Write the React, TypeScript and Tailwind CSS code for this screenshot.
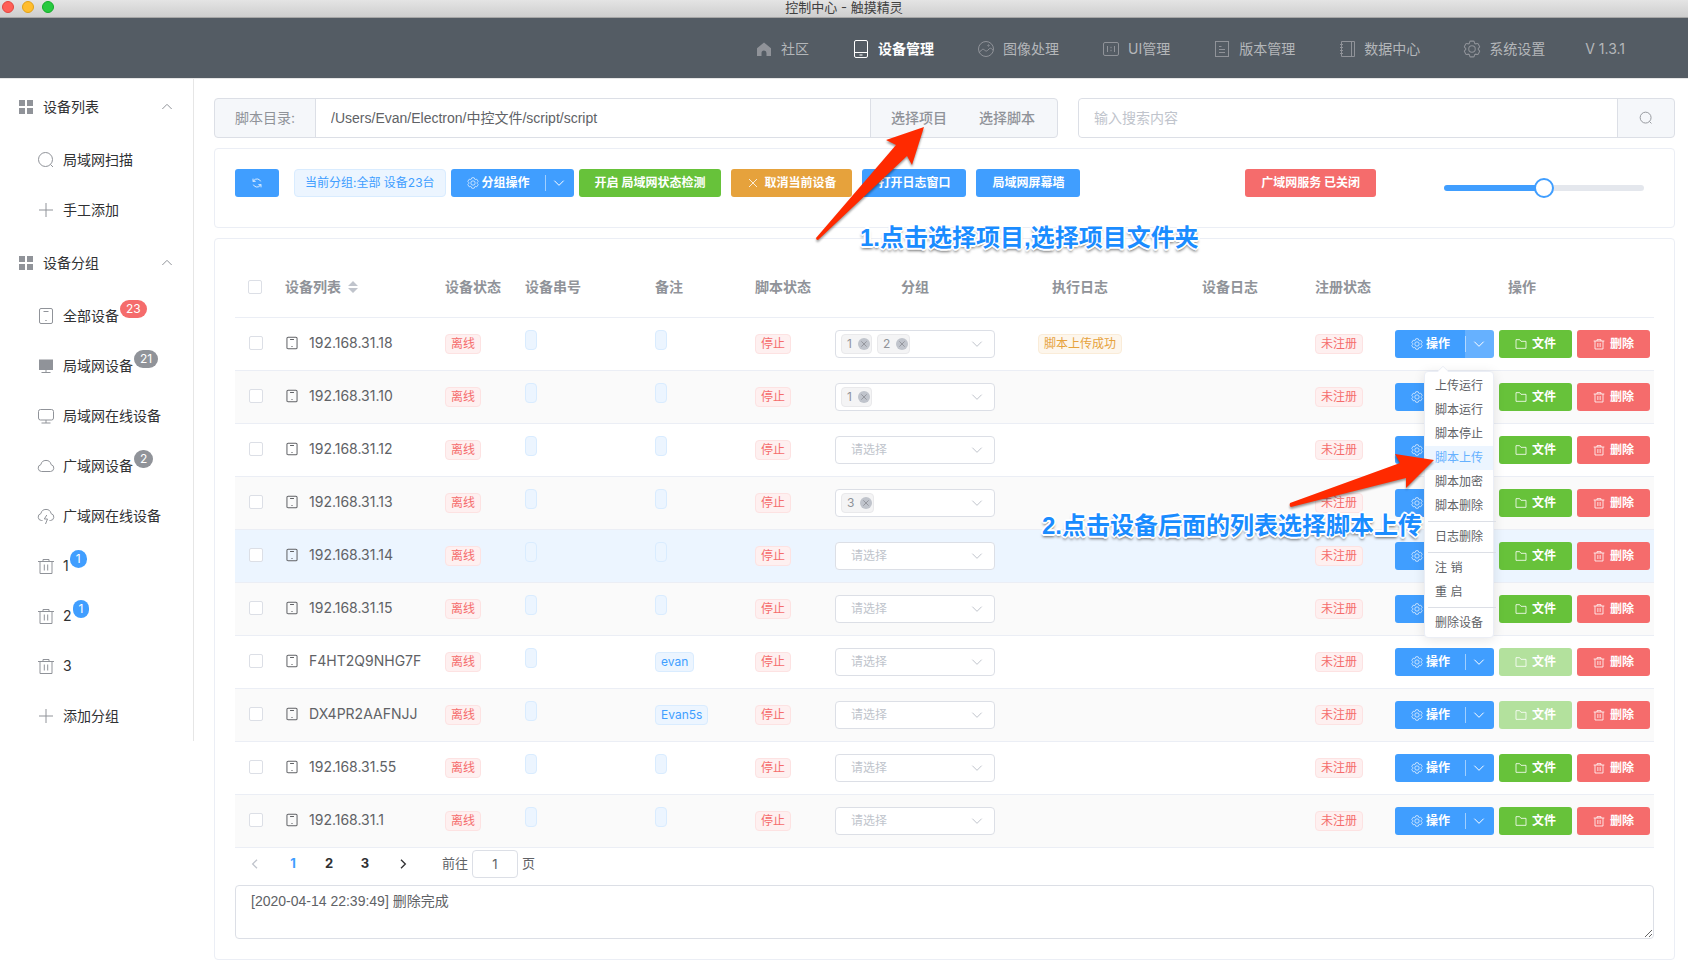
import { useState } from 'react';
import type { ReactNode } from 'react';

// ─── Icons ────────────────────────────────────────────────────────────────────
const gear =
  'M600.704 64a32 32 0 0 1 30.464 22.208l35.2 109.376c14.784 7.232 28.928 15.36 42.432 24.512l112.384-24.192a32 32 0 0 1 34.432 15.36L944.32 364.8a32 32 0 0 1-4.032 37.504l-77.12 85.12a357.12 357.12 0 0 1 0 49.024l77.12 85.248a32 32 0 0 1 4.032 37.504l-88.704 153.6a32 32 0 0 1-34.432 15.296L708.8 803.904c-13.44 9.088-27.648 17.28-42.368 24.512l-35.264 109.376A32 32 0 0 1 600.704 960H423.296a32 32 0 0 1-30.464-22.208L357.696 828.48a351.616 351.616 0 0 1-42.56-24.64l-112.32 24.256a32 32 0 0 1-34.432-15.36L79.68 659.2a32 32 0 0 1 4.032-37.504l77.12-85.248a357.12 357.12 0 0 1 0-48.896l-77.12-85.248A32 32 0 0 1 79.68 364.8l88.704-153.6a32 32 0 0 1 34.432-15.296l112.32 24.256c13.568-9.152 27.776-17.408 42.56-24.64l35.2-109.312A32 32 0 0 1 423.232 64z';

const icons = {
  home: (
    <path
      d="M9 2.5 16 8.2V16h-4.5v-3a2.5 2.5 0 0 0-5 0v3H2V8.200z"
      fill="currentColor"
      stroke="none"
    />
  ),
  phone: (
    <>
      <rect x="2.500" y=".5" width="13" height="17" rx="1.500" />
      <path d="M2.500 12.500h13M7.500 15h3" />
    </>
  ),
  picture: (
    <>
      <circle cx="9" cy="9" r="7.500" />
      <circle cx="11.500" cy="5.500" r=".7" />
      <path d="m2.200 12.500 2.300-2.500c1-1 2-1 3 0s2 1.500 3 .5l1.500-1.500c1-1 2-1 2.800 0l1.200 1.200" />
    </>
  ),
  scale: (
    <>
      <rect x="1.500" y="2.500" width="15" height="13" rx="1.500" />
      <path d="M5.500 6v6M12.500 6v6M9 6.800v1.400M9 9.800v1.400" />
    </>
  ),
  tickets: (
    <>
      <rect x="2.500" y="1.500" width="13" height="15" />
      <path d="M6 6.500h2.500M6 9.500h6M6 12.500h6" />
    </>
  ),
  notebook: (
    <>
      <path d="M3.500 1.500h13v15h-13zM13.500 1.500v15" />
      <path d="M2 4.500h3M2 7.500h3M2 10.500h3M2 13.500h3" />
    </>
  ),
  setting: (
    <g transform="scale(.017578)" strokeWidth="58">
      <path d={gear} />
      <circle cx="512" cy="512" r="185" />
    </g>
  ),
  grid: (
    <path
      d="M2 2h6v6H2zM10 2h6v6h-6zM2 10h6v6H2zM10 10h6v6h-6z"
      fill="currentColor"
      stroke="none"
    />
  ),
  search: (
    <>
      <circle cx="8.500" cy="8.500" r="7" />
      <path d="m13.500 13.500 2.500 2.500" />
    </>
  ),
  plus: <path d="M2 9h14M9 2v14" />,
  mobile: (
    <>
      <rect x="2.500" y="1.500" width="13" height="15" rx="1.500" />
      <path d="M6.500 4.500h5M8.300 13.500h1.400" />
    </>
  ),
  platform: (
    <>
      <path d="M2 2.500h14V13H2z" fill="currentColor" stroke="none" />
      <path d="M9 13v2M4.500 15.500h9" />
    </>
  ),
  monitor: (
    <>
      <rect x="1.500" y="2.500" width="15" height="10.500" rx="2" />
      <path d="M9 13v3M4.500 16h9" />
    </>
  ),
  cloud: (
    <path d="M4.500 14.500a3.500 3.500 0 0 1-.6-6.900 5.200 5.200 0 0 1 10.200 0 3.500 3.500 0 0 1-.6 6.900z" />
  ),
  lightning: (
    <>
      <path d="M5.500 13.500h-1a3.500 3.500 0 0 1-.6-6.900 5.200 5.200 0 0 1 10.200 0 3.500 3.500 0 0 1-.6 6.900h-1" />
      <path d="M9.800 8 7.300 12h3.200l-2 5" />
    </>
  ),
  trash: (
    <path d="M1 4.500h16M6 4.500v-2h6v2M3 4.500v12h12v-12M7.300 7.500v6M10.700 7.500v6" />
  ),
  refresh: (
    <>
      <path d="M3.500 11.500A6 6 0 0 0 13.500 13l1.500-1.500M14.500 6.500A6 6 0 0 0 4.500 5L3 6.500" />
      <path d="M3 2.500v4h4M15 15.500v-4h-4" />
    </>
  ),
  folder: <path d="M1.500 2.500h5.500l2 2.500h7.500v10.500h-15z" />,
  close: <path d="m3 3 12 12M15 3 3 15" />,
  down: <path d="m2 5.500 7 7 7-7" />,
  up: <path d="m2 12 7-7 7 7" />,
  left: <path d="M12 2.500 5.500 9l6.500 6.500" />,
  right: <path d="M6 2.500 12.500 9 6 15.500" />,
};

type IconName = keyof typeof icons;

function Icon({ name, className = 'size-[18px] stroke-1' }: { name: IconName; className?: string }) {
  return (
    <svg
      viewBox="0 0 18 18"
      fill="none"
      stroke="currentColor"
      aria-hidden="true"
      className={`inline-block shrink-0 ${className}`}
    >
      {icons[name]}
    </svg>
  );
}

// ─── Data ─────────────────────────────────────────────────────────────────────
const navItems: { label: string; icon: IconName; active?: boolean }[] = [
  { label: '社区', icon: 'home' },
  { label: '设备管理', icon: 'phone', active: true },
  { label: '图像处理', icon: 'picture' },
  { label: 'UI管理', icon: 'scale' },
  { label: '版本管理', icon: 'tickets' },
  { label: '数据中心', icon: 'notebook' },
  { label: '系统设置', icon: 'setting' },
];

type SideItem = { label: string; icon: IconName; badge?: number; tone?: 'red' | 'gray' | 'blue' };

const sideGroups: { title: string; items: SideItem[] }[] = [
  {
    title: '设备列表',
    items: [
      { label: '局域网扫描', icon: 'search' },
      { label: '手工添加', icon: 'plus' },
    ],
  },
  {
    title: '设备分组',
    items: [
      { label: '全部设备', icon: 'mobile', badge: 23, tone: 'red' },
      { label: '局域网设备', icon: 'platform', badge: 21, tone: 'gray' },
      { label: '局域网在线设备', icon: 'monitor' },
      { label: '广域网设备', icon: 'cloud', badge: 2, tone: 'gray' },
      { label: '广域网在线设备', icon: 'lightning' },
      { label: '1', icon: 'trash', badge: 1, tone: 'blue' },
      { label: '2', icon: 'trash', badge: 1, tone: 'blue' },
      { label: '3', icon: 'trash' },
      { label: '添加分组', icon: 'plus' },
    ],
  },
];

type Device = {
  name: string;
  remark?: string;
  groups?: string[];
  log?: string;
  current?: boolean;
  menuOpen?: boolean;
  fileDisabled?: boolean;
};

const devices: Device[] = [
  { name: '192.168.31.18', groups: ['1', '2'], log: '脚本上传成功', menuOpen: true },
  { name: '192.168.31.10', groups: ['1'] },
  { name: '192.168.31.12' },
  { name: '192.168.31.13', groups: ['3'] },
  { name: '192.168.31.14', current: true },
  { name: '192.168.31.15' },
  { name: 'F4HT2Q9NHG7F', remark: 'evan', fileDisabled: true },
  { name: 'DX4PR2AAFNJJ', remark: 'Evan5s', fileDisabled: true },
  { name: '192.168.31.55' },
  { name: '192.168.31.1' },
];

const menuSections = [
  ['上传运行', '脚本运行', '脚本停止', '脚本上传', '脚本加密', '脚本删除'],
  ['日志删除'],
  ['注 销', '重 启'],
  ['删除设备'],
];

const badgeTones = {
  red: 'bg-[#f56c6c]',
  gray: 'bg-[#909399]',
  blue: 'bg-[#409eff]',
};

const tagTones = {
  blue: 'border-[#d9ecff] bg-[#ecf5ff] text-[#409eff]',
  red: 'border-[#fde2e2] bg-[#fef0f0] text-[#f56c6c]',
  orange: 'border-[#faecd8] bg-[#fdf6ec] text-[#e6a23c]',
};

const buttonTones = {
  blue: 'bg-[#409eff]',
  green: 'bg-[#67c23a]',
  orange: 'bg-[#e6a23c]',
  red: 'bg-[#f56c6c]',
};

// ─── Small parts ──────────────────────────────────────────────────────────────
function Tag({ tone, children }: { tone: keyof typeof tagTones; children?: ReactNode }) {
  return (
    <span className={`inline-block h-5 rounded border px-[5px] text-xs leading-[18px] ${tagTones[tone]}`}>
      {children}
    </span>
  );
}

function Button({
  tone,
  icon,
  disabled,
  children,
}: {
  tone: keyof typeof buttonTones;
  icon?: IconName;
  disabled?: boolean;
  children: ReactNode;
}) {
  return (
    <button
      type="button"
      disabled={disabled}
      className={`flex h-7 items-center gap-[5px] rounded-[3px] px-4 text-xs font-bold text-white disabled:bg-[#b3e19d] ${buttonTones[tone]}`}
    >
      {icon && <Icon name={icon} className="size-3 stroke-[1.200]" />}
      {children}
    </button>
  );
}

function SplitButton({ label, open }: { label: string; open?: boolean }) {
  return (
    <div className="flex h-7 text-xs font-bold text-white">
      <button
        type="button"
        className="flex items-center gap-[3px] rounded-l-[3px] bg-[#409eff] pl-4 pr-[15px]"
      >
        <Icon name="setting" className="size-3" />
        {label}
      </button>
      <button
        type="button"
        aria-label="更多"
        aria-expanded={!!open}
        className={`flex w-[29px] items-center rounded-r-[3px] ${open ? 'bg-[#66b1ff]' : 'bg-[#409eff]'}`}
      >
        <span className="h-4 w-px bg-white/50" />
        <Icon name="down" className="ml-[7px] size-3 stroke-[1.500]" />
      </button>
    </div>
  );
}

function ActionMenu() {
  return (
    <div className="absolute left-[29px] top-[41px] z-10 rounded border border-[#ebeef5] bg-white py-[2px] text-xs text-[#606266] shadow-[0_2px_12px_rgba(0,0,0,0.1)]">
      <span className="absolute -top-[5px] left-[14px] size-2 rotate-45 rounded-tl-[2px] border-l border-t border-[#ebeef5] bg-white" />
      {menuSections.map((section, i) => (
        <div
          key={section[0]}
          className={i > 0 ? 'relative pt-[7px] before:absolute before:-right-[3px] before:left-[3px] before:top-[3px] before:h-px before:bg-[#dcdfe6]' : 'relative'}
        >
          {section.map((item) => (
            <button
              key={item}
              type="button"
              className={`block h-6 w-full whitespace-nowrap px-[10px] text-left leading-6 ${
                item === '脚本上传' ? 'bg-[#ecf5ff] text-[#66b1ff]' : ''
              }`}
            >
              {item}
            </button>
          ))}
        </div>
      ))}
    </div>
  );
}

function GroupSelect({ device }: { device: Device }) {
  const groups = device.groups ?? [];
  return (
    <div className="flex h-7 w-[160px] items-center gap-[5px] rounded border border-[#dcdfe6] bg-white pl-[5px] pr-[11px]">
      {groups.map((g) => (
        <span
          key={g}
          className="flex h-5 items-center gap-[6px] rounded border border-[#e9e9eb] bg-[#f4f4f5] pl-[5px] pr-px text-xs text-[#909399]"
        >
          {g}
          <button
            type="button"
            aria-label={`移除分组${g}`}
            className="flex size-3 items-center justify-center rounded-full bg-[#c0c4cc]"
          >
            <Icon name="close" className="size-2 stroke-2" />
          </button>
        </span>
      ))}
      <select
        aria-label={`${device.name} 分组`}
        defaultValue=""
        className={`h-full min-w-0 flex-1 appearance-none bg-transparent text-xs text-[#c0c4cc] outline-none ${
          groups.length ? '' : 'pl-[10px]'
        }`}
      >
        <option value="">{groups.length ? '' : '请选择'}</option>
        <option>1</option>
        <option>2</option>
        <option>3</option>
      </select>
      <Icon name="down" className="size-3 stroke-[1.500] text-[#c0c4cc]" />
    </div>
  );
}

const checkboxClass =
  'block size-[14px] mx-auto appearance-none rounded-[2px] border border-[#dcdfe6] bg-white';

// ─── Page parts ───────────────────────────────────────────────────────────────
function TitleBar() {
  return (
    <div className="relative flex h-[18px] justify-center border-b border-[#a6a6a6] bg-linear-to-b from-[#e4e4e4] to-[#cecece]">
      <div className="absolute left-[2px] top-px flex gap-2">
        <span className="size-3 rounded-full border border-[#e2463f] bg-[#ff5f57]" />
        <span className="size-3 rounded-full border border-[#e1a116] bg-[#ffbd2e]" />
        <span className="size-3 rounded-full border border-[#12ac28] bg-[#28c940]" />
      </div>
      <h1 className="text-[13px] leading-[15px] text-[#404040]">控制中心 - 触摸精灵</h1>
    </div>
  );
}

function Header() {
  return (
    <header className="flex h-[60px] justify-end bg-[#545c64] pr-[43px] pt-[2px]">
      <nav className="flex text-sm">
        {navItems.map((item) => (
          <a
            key={item.label}
            href="#"
            className={`flex items-center px-5 ${item.active ? 'font-bold text-white' : 'text-[#b4b7ba]'}`}
          >
            <span className={`mr-[5px] flex w-6 justify-center ${item.active ? '' : 'text-[#909399]'}`}>
              <Icon name={item.icon} />
            </span>
            {item.label}
          </a>
        ))}
        <span className="flex items-center px-5 text-[#b4b7ba]">V 1.3.1</span>
      </nav>
    </header>
  );
}

function Sidebar() {
  return (
    <aside className="w-[194px] shrink-0 self-start border-r border-[#e6e6e6] text-sm text-[#303133]">
      {sideGroups.map((group) => (
        <section key={group.title}>
          <button type="button" className="flex h-14 w-full items-center pl-[14px] pr-5">
            <span className="mr-[5px] flex w-6 justify-center text-[#909399]">
              <Icon name="grid" />
            </span>
            {group.title}
            <Icon name="up" className="ml-auto size-3 stroke-[1.500] text-[#909399]" />
          </button>
          <ul>
            {group.items.map((item) => (
              <li key={item.label}>
                <a href="#" className="flex h-[50px] items-center pl-[34px]">
                  <span className="mr-[5px] flex w-6 justify-center text-[#909399]">
                    <Icon name={item.icon} />
                  </span>
                  {item.label}
                  {item.badge && item.tone && (
                    <span
                      className={`ml-px mt-[9px] h-[18px] self-start rounded-full px-[6px] text-xs leading-[18px] text-white ${badgeTones[item.tone]}`}
                    >
                      {item.badge}
                    </span>
                  )}
                </a>
              </li>
            ))}
          </ul>
        </section>
      ))}
    </aside>
  );
}

function PathBar() {
  return (
    <div className="grid grid-cols-24 gap-5 text-sm text-[#909399]">
      <div className="col-span-14 flex h-10 rounded border border-[#dcdfe6] bg-[#f5f7fa]">
        <label htmlFor="script-dir" className="flex shrink-0 items-center px-5">
          脚本目录:
        </label>
        <input
          id="script-dir"
          defaultValue="/Users/Evan/Electron/中控文件/script/script"
          className='min-w-0 flex-1 border-x border-[#dcdfe6] bg-white px-[15px] font-["Liberation_Sans","Noto_Sans_CJK_SC",sans-serif] text-[#606266] outline-none'
        />
        <button type="button" className="shrink-0 pl-5 pr-4 font-medium">
          选择项目
        </button>
        <button type="button" className="shrink-0 pl-4 pr-[22px] font-medium">
          选择脚本
        </button>
      </div>
      <div className="col-span-10 flex h-10 rounded border border-[#dcdfe6] bg-[#f5f7fa]">
        <input
          aria-label="搜索"
          placeholder="输入搜索内容"
          className="min-w-0 flex-1 rounded-l border-r border-[#dcdfe6] bg-white px-[15px] outline-none placeholder:text-[#c0c4cc]"
        />
        <button type="button" aria-label="搜索" className="flex w-14 items-center justify-center">
          <Icon name="search" className="size-[14px] stroke-[1.200]" />
        </button>
      </div>
    </div>
  );
}

function Toolbar() {
  const [scale, setScale] = useState(50);
  return (
    <div className="mt-[10px] flex h-20 items-start rounded border border-[#ebeef5] p-5">
      <button
        type="button"
        aria-label="刷新"
        className="flex h-7 w-11 items-center justify-center rounded-[3px] bg-[#409eff] text-white"
      >
        <Icon name="refresh" className="size-3 stroke-[1.200]" />
      </button>
      <span className="ml-[15px] mr-[5px] h-7 rounded border border-[#d9ecff] bg-[#ecf5ff] px-[10px] text-xs leading-[26px] text-[#409eff]">
        当前分组:全部 设备23台
      </span>
      <SplitButton label="分组操作" />
      <div className="ml-[5px] flex gap-[10px]">
        <Button tone="green">开启 局域网状态检测</Button>
        <Button tone="orange" icon="close">取消当前设备</Button>
        <Button tone="blue">打开日志窗口</Button>
        <Button tone="blue">局域网屏幕墙</Button>
      </div>
      <div className="ml-auto mr-[10px] flex gap-[68px]">
        <Button tone="red">广域网服务 已关闭</Button>
        <input
          type="range"
          aria-label="缩放"
          value={scale}
          onChange={(e) => setScale(Number(e.target.value))}
          className="mt-4 h-[6px] w-[200px] appearance-none rounded-[3px] [&::-webkit-slider-thumb]:size-5 [&::-webkit-slider-thumb]:appearance-none [&::-webkit-slider-thumb]:rounded-full [&::-webkit-slider-thumb]:border-2 [&::-webkit-slider-thumb]:border-[#409eff] [&::-webkit-slider-thumb]:bg-white"
          style={{ background: `linear-gradient(to right, #409eff ${scale}%, #e4e7ed ${scale}%)` }}
        />
      </div>
    </div>
  );
}

function DeviceRow({ device, striped }: { device: Device; striped: boolean }) {
  const bg = device.current ? 'bg-[#ecf5ff]' : striped ? 'bg-[#fafafa]' : '';
  const cell = 'px-[10px] pb-[2px]';
  return (
    <tr className={`h-[53px] border-b border-[#ebeef5] ${bg}`}>
      <td className="pb-[2px] pl-[2px]">
        <input type="checkbox" aria-label={device.name} className={checkboxClass} />
      </td>
      <td className={cell}>
        <div className="flex items-center gap-[10px]">
          <Icon name="mobile" className="size-[14px] stroke-[1.300]" />
          {device.name}
        </div>
      </td>
      <td className={cell}><Tag tone="red">离线</Tag></td>
      <td className={cell}><Tag tone="blue" /></td>
      <td className={cell}><Tag tone="blue">{device.remark}</Tag></td>
      <td className={cell}><Tag tone="red">停止</Tag></td>
      <td className="px-[10px]"><GroupSelect device={device} /></td>
      <td className={`text-center ${cell}`}>{device.log && <Tag tone="orange">{device.log}</Tag>}</td>
      <td />
      <td className={cell}><Tag tone="red">未注册</Tag></td>
      <td className="pl-[10px] pr-[5px]">
        <div className="relative flex gap-[5px] whitespace-nowrap">
          <SplitButton label="操作" open={device.menuOpen} />
          <Button tone="green" icon="folder" disabled={device.fileDisabled}>文件</Button>
          <Button tone="red" icon="trash">删除</Button>
          {device.menuOpen && <ActionMenu />}
        </div>
      </td>
    </tr>
  );
}

function DeviceTable() {
  return (
    <table className="w-full table-fixed text-left text-sm leading-[23px] text-[#606266]">
      <colgroup>
        <col className="w-[40px]" />
        <col className="w-[160px]" />
        <col className="w-[80px]" />
        <col className="w-[130px]" />
        <col className="w-[100px]" />
        <col className="w-[80px]" />
        <col className="w-[180px]" />
        <col />
        <col />
        <col className="w-[80px]" />
        <col className="w-[269px]" />
      </colgroup>
      <thead className="text-[#909399]">
        <tr className="h-[58px] whitespace-nowrap border-b border-[#ebeef5] *:pb-[2px]">
          <th>
            <input type="checkbox" aria-label="全选" className={checkboxClass} />
          </th>
          <th className="px-[10px]">
            <div className="flex items-center gap-[7px]">
              设备列表
              <svg viewBox="0 0 10 12" className="h-3 w-[10px] fill-[#c0c4cc]" aria-hidden="true">
                <path d="M5 0l5 5H0zM5 12l5-5H0z" />
              </svg>
            </div>
          </th>
          <th className="px-[10px]">设备状态</th>
          <th className="px-[10px]">设备串号</th>
          <th className="px-[10px]">备注</th>
          <th className="px-[10px]">脚本状态</th>
          <th className="text-center">分组</th>
          <th className="text-center">执行日志</th>
          <th className="text-center">设备日志</th>
          <th className="px-[10px]">注册状态</th>
          <th className="pl-[10px] pr-[5px] text-center">操作</th>
        </tr>
      </thead>
      <tbody>
        {devices.map((device, i) => (
          <DeviceRow key={device.name} device={device} striped={i % 2 === 1} />
        ))}
      </tbody>
    </table>
  );
}

function Pagination() {
  return (
    <nav className="flex h-[37px] items-start pt-[2px] text-[13px] text-[#606266]" aria-label="分页">
      <button type="button" disabled aria-label="上一页" className="flex h-7 w-10 items-center justify-center text-[#c0c4cc]">
        <Icon name="left" className="size-3 stroke-2" />
      </button>
      {[1, 2, 3].map((n) => (
        <button
          key={n}
          type="button"
          className={`h-7 w-9 font-bold ${n === 1 ? 'text-[#409eff]' : 'text-[#303133]'}`}
        >
          {n}
        </button>
      ))}
      <button type="button" aria-label="下一页" className="flex h-7 w-10 items-center justify-center text-[#303133]">
        <Icon name="right" className="size-3 stroke-2" />
      </button>
      <label className="ml-[19px] flex h-7 items-center gap-1">
        前往
        <input defaultValue="1" className="h-7 w-[46px] rounded border border-[#dcdfe6] text-center outline-none" />
        页
      </label>
    </nav>
  );
}

// Red pointers and captions laid over the page
function Guide() {
  const caption =
    'absolute whitespace-nowrap text-2xl leading-6 font-bold text-[#1a8cff] font-["Liberation_Sans","Noto_Sans_CJK_SC",sans-serif] [text-shadow:1px_0_#fff,-1px_0_#fff,0_1px_#fff,0_-1px_#fff,2px_0_#fff,-2px_0_#fff,0_2px_#fff,0_-2px_#fff,1px_1px_#fff,-1px_-1px_#fff,1px_-1px_#fff,-1px_1px_#fff,0_3px_3px_rgba(0,0,0,0.6)]';
  const arrow = 'absolute fill-[#ff2a00] drop-shadow-[0_2px_1px_rgba(0,0,0,0.4)]';
  return (
    <div className="pointer-events-none absolute inset-0 z-20">
      <svg viewBox="0 0 110 116" className={`left-[815px] top-[126px] h-[116px] w-[110px] ${arrow}`} aria-hidden="true">
        <path d="M109 1 97 39 92 30 3 114Q1 114 1 112L81 19 71 14z" />
      </svg>
      <p className={`left-[860px] top-[226px] ${caption}`}>1.点击选择项目,选择项目文件夹</p>
      <svg viewBox="0 0 146 56" className={`left-[1289px] top-[453px] h-[56px] w-[146px] ${arrow}`} aria-hidden="true">
        <path d="M145 7 117 35V25L2 54Q0 53 1 50L111 10 106 1z" />
      </svg>
      <p className={`left-[1042px] top-[514px] ${caption}`}>2.点击设备后面的列表选择脚本上传</p>
    </div>
  );
}

export default function App() {
  return (
    <div className='relative min-h-screen bg-white font-["Inter","Noto_Sans_CJK_SC",sans-serif]'>
      <TitleBar />
      <Header />
      <div className="flex border-t border-[#e6e6e6]">
        <Sidebar />
        <main className="min-w-0 flex-1 pb-5 pl-5 pr-[13px] pt-[19px]">
          <PathBar />
          <Toolbar />
          <div className="mt-[10px] rounded border border-[#ebeef5] p-5">
            <DeviceTable />
            <Pagination />
            <textarea
              aria-label="运行日志"
              defaultValue="[2020-04-14 22:39:49] 删除完成"
              className='block h-[54px] w-full resize-y rounded border border-[#dcdfe6] px-[15px] py-[5px] font-["Liberation_Sans","Noto_Sans_CJK_SC",sans-serif] text-sm leading-[21px] text-[#606266] outline-none'
            />
          </div>
        </main>
      </div>
      <Guide />
    </div>
  );
}
